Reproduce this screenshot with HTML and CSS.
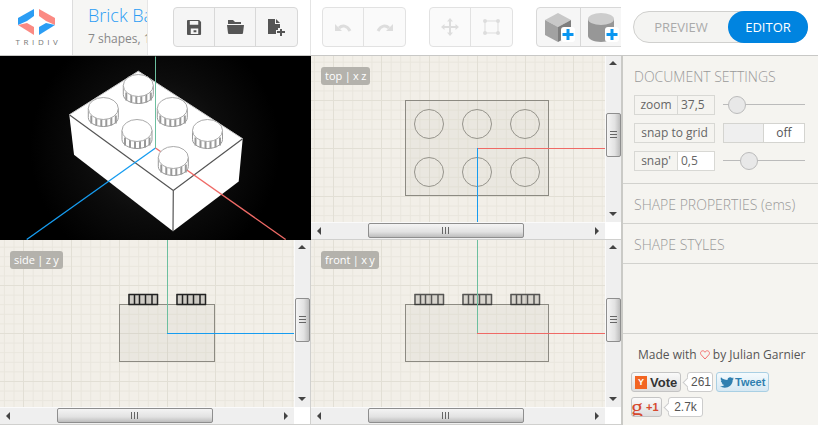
FILE: index.html
```html
<!DOCTYPE html>
<html lang="en">
<head>
    <meta charset="UTF-8">
    <meta name="viewport" content="width=device-width, initial-scale=1.0">
    <title>Tridiv</title>
    <link rel="stylesheet" href="styles.css">
</head>
<body>

<div class="app">
    <div class="main">
        <!-- Top toolbar -->
        <header class="header">
            <div class="logo">
                <svg class="logo-mark" width="38" height="26" viewBox="0 0 38 26">
                    <polygon points="0,9 16,0 16,7 9,12 0,16" fill="#2b9df4"/>
                    <polygon points="37,9 21,0 21,7 28,12 37,16" fill="#fb8a83"/>
                    <polygon points="0,16 9,14 16,18 16,26" fill="#fb8a83"/>
                    <polygon points="37,16 28,14 21,18 21,26" fill="#2b9df4"/>
                </svg>
                <span class="logo-text">TRIDIV</span>
            </div>
            <div class="doc">
                <div class="doc-title">Brick Base</div>
                <div class="doc-info">7 shapes, 1 selected</div>
            </div>
            <div class="tools tools-file">
                <div class="btn-group">
                    <button class="btn"><svg width="15" height="15" viewBox="0 0 16 16"><path d="M1 0h12l2 2v13a1 1 0 0 1-1 1H1a1 1 0 0 1-1-1V1a1 1 0 0 1 1-1zm2 1v4h9V1zm1 8v6h8V9zm3 2h3v2H7z" fill="#555" fill-rule="evenodd"/></svg></button>
                    <button class="btn"><svg width="17" height="14" viewBox="0 0 17 14"><path d="M1 0h5l2 2h6v2H1zM0 5h17l-1 8a1 1 0 0 1-1 1H2a1 1 0 0 1-1-1z" fill="#555"/></svg></button>
                    <button class="btn"><svg width="17" height="17" viewBox="0 0 17 17"><path d="M0 0h7v5h5v4H10v2H8v4H0zM8 0l4 4H8z" fill="#555"/><path d="M12 10h2v2h3v2h-3v3h-2v-3H9v-2h3z" fill="#555"/></svg></button>
                </div>
            </div>
            <div class="tools tools-edit">
                <div class="btn-group">
                    <button class="btn"><svg width="17" height="9" viewBox="0 0 17 9"><path d="M4 5C7 2 12 2 15 8" fill="none" stroke="#ddd" stroke-width="3"/><polygon points="0,1 0,8 7,8" fill="#ddd"/></svg></button>
                    <button class="btn"><svg width="17" height="9" viewBox="0 0 17 9"><path d="M13 5C10 2 5 2 2 8" fill="none" stroke="#ddd" stroke-width="3"/><polygon points="17,1 17,8 10,8" fill="#ddd"/></svg></button>
                </div>
                <div class="btn-group">
                    <button class="btn"><svg width="18" height="18" viewBox="0 0 18 18"><path d="M9 0l3 3.500h-2V8h4.500V6L18 9l-3.500 3v-2H10v4.500h2L9 18l-3-3.500h2V10H3.500v2L0 9l3.500-3v2H8V3.500H6z" fill="#ddd"/></svg></button>
                    <button class="btn"><svg width="17" height="16" viewBox="0 0 17 16"><path d="M2 2h13v12H2z" fill="none" stroke="#ddd"/><g fill="#ddd"><circle cx="2" cy="2" r="2"/><circle cx="15" cy="2" r="2"/><circle cx="2" cy="14" r="2"/><circle cx="15" cy="14" r="2"/></g></svg></button>
                </div>
                <div class="btn-group btn-group-shapes">
                    <button class="btn btn-shape">
                        <svg width="32" height="31" viewBox="0 0 32 31">
                            <polygon points="15,1 28,8 15,15 2,8" fill="#c8c8c8"/>
                            <polygon points="2,8 15,15 15,30 2,23" fill="#a2a2a2"/>
                            <polygon points="15,15 28,8 28,23 15,30" fill="#7e7e7e"/>
                            <rect x="18" y="15" width="14" height="15" fill="#fff" rx="3"/>
                            <path d="M23.500 17h3v4h4v3h-4v4h-3v-4h-4v-3h4z" fill="#0a96f0"/>
                        </svg>
                    </button>
                    <button class="btn btn-shape">
                        <svg width="32" height="31" viewBox="0 0 32 31">
                            <path d="M1 7v17c0 3 6 6 13 6s13-3 13-6V7z" fill="#979797"/>
                            <ellipse cx="14" cy="7" rx="13" ry="6" fill="#cdcdcd"/>
                            <rect x="18" y="15" width="14" height="15" fill="#fff" rx="3"/>
                            <path d="M23.500 17h3v4h4v3h-4v4h-3v-4h-4v-3h4z" fill="#0a96f0"/>
                        </svg>
                    </button>
                </div>
            </div>
        </header>

        <!-- The four views -->
        <div class="views">
            <div class="view view-3d">
                <svg class="scene" viewBox="0 56 311 183">
                    <defs>
                        <g id="stud3d">
                            <path d="M-15 0v9c0 5 7 9 15 9s15-4 15-9V0z" fill="#fff" stroke="#999"/>
                            <path d="M-12 7v8M-7 9v8M-2 10v8M3 10v8M8 9v8M12.500 7v8" stroke="#999" stroke-width="2"/>
                            <ellipse rx="15" ry="11" fill="#fff" stroke="#aaa"/>
                        </g>
                    </defs>
                    <polygon points="138.300,70.700 69.300,114.300 74,154.300 173,230.700 238.700,181 242.700,138.300" fill="#fff"/>
                    <path d="M69.300 114.300L173.300 190L242.700 138.300M173.300 190L173 230.700" fill="none" stroke="#555" stroke-width="1.200"/>
                    <path d="M69.300 114.300L138.300 70.700L242.700 138.300" fill="none" stroke="#ccc"/>
                    <path d="M155.500 147.500L26.700 239" stroke="#169cf0" stroke-width="1.300"/>
                    <path d="M155.500 147.500L285.700 239" stroke="#ef6a66" stroke-width="1.300"/>
                    <use href="#stud3d" x="138.300" y="85"/>
                    <use href="#stud3d" x="103.300" y="108"/>
                    <use href="#stud3d" x="172.300" y="108"/>
                    <use href="#stud3d" x="137" y="130"/>
                    <use href="#stud3d" x="207.500" y="130"/>
                    <use href="#stud3d" x="173.300" y="157"/>
                    <path d="M155.500 56V147.500" stroke="#6cbf9f"/>
                </svg>
            </div>

            <div class="view">
                <div class="canvas canvas-top">
                    <span class="view-tag">top | x z</span>
                    <svg class="scene" viewBox="311 56 294 166">
                        <rect x="405.500" y="100.500" width="143" height="95" class="brick"/>
                        <circle cx="429" cy="124" r="14.500" class="stud-top"/>
                        <circle cx="477" cy="124" r="14.500" class="stud-top"/>
                        <circle cx="525" cy="124" r="14.500" class="stud-top"/>
                        <circle cx="429" cy="172" r="14.500" class="stud-top"/>
                        <circle cx="477" cy="172" r="14.500" class="stud-top"/>
                        <circle cx="525" cy="172" r="14.500" class="stud-top"/>
                        <path d="M477.500 148.500H605" class="axis-x"/>
                        <path d="M477.500 148V222" class="axis-z"/>
                    </svg>
                </div>
                <div class="scroll-v"><i class="arrow-up"></i><b class="thumb-v thumb-v-top"></b><i class="arrow-down"></i></div>
                <div class="scroll-h"><i class="arrow-left"></i><b class="thumb-h"></b><i class="arrow-right"></i></div>
                <div class="scroll-corner"></div>
            </div>

            <div class="view">
                <div class="canvas canvas-side">
                    <span class="view-tag">side | z y</span>
                    <svg class="scene" viewBox="0 240 294 167">
                        <defs>
                            <g id="studSide">
                                <rect x="0" y="0" width="30" height="11" fill="#000" opacity=".15"/>
                                <path d="M.5 .5H30M.5 10.500H30M1 0v11M6.500 0v11M11.500 0v11M17.500 0v11M24 0v11M29.500 0v11" fill="none" stroke="#222" stroke-width="1.500"/>
                            </g>
                        </defs>
                        <rect x="119.500" y="304.500" width="95" height="57" class="brick"/>
                        <use href="#studSide" x="128" y="294"/>
                        <use href="#studSide" x="176" y="294"/>
                        <path d="M167.500 240V333.500" class="axis-y"/>
                        <path d="M167 333.500H294" class="axis-z"/>
                    </svg>
                </div>
                <div class="scroll-v"><i class="arrow-up"></i><b class="thumb-v"></b><i class="arrow-down"></i></div>
                <div class="scroll-h"><i class="arrow-left"></i><b class="thumb-h thumb-h-side"></b><i class="arrow-right"></i></div>
                <div class="scroll-corner"></div>
            </div>

            <div class="view">
                <div class="canvas canvas-front">
                    <span class="view-tag">front | x y</span>
                    <svg class="scene" viewBox="311 240 294 167">
                        <rect x="405.500" y="304.500" width="143" height="57" class="brick"/>
                        <use href="#studSide" x="414" y="294" opacity=".75"/>
                        <use href="#studSide" x="462" y="294" opacity=".75"/>
                        <use href="#studSide" x="510" y="294" opacity=".75"/>
                        <path d="M477.500 240V333.500" class="axis-y"/>
                        <path d="M477 333.500H605" class="axis-x"/>
                    </svg>
                </div>
                <div class="scroll-v"><i class="arrow-up"></i><b class="thumb-v"></b><i class="arrow-down"></i></div>
                <div class="scroll-h"><i class="arrow-left"></i><b class="thumb-h"></b><i class="arrow-right"></i></div>
                <div class="scroll-corner"></div>
            </div>
        </div>
    </div>

    <!-- Right panel -->
    <aside class="panel">
        <div class="mode">
            <div class="mode-switch">
                <span class="mode-item">PREVIEW</span>
                <span class="mode-item mode-active">EDITOR</span>
            </div>
        </div>

        <section class="section section-doc">
            <h2>DOCUMENT SETTINGS</h2>
            <div class="row">
                <div class="field"><label class="field-label">zoom</label><span class="field-value">37,5</span></div>
                <div class="slider"><span class="slider-thumb" style="left: 5px"></span></div>
            </div>
            <div class="row">
                <div class="field"><label class="field-label field-wide">snap to grid</label></div>
                <div class="switch"><span class="switch-knob"></span><span class="switch-text">off</span></div>
            </div>
            <div class="row">
                <div class="field"><label class="field-label">snap'</label><span class="field-value field-white">0,5</span></div>
                <div class="slider"><span class="slider-thumb" style="left: 17px"></span></div>
            </div>
        </section>
        <section class="section"><h2>SHAPE PROPERTIES (ems)</h2></section>
        <section class="section"><h2>SHAPE STYLES</h2></section>

        <footer class="credits">
            <p class="made">Made with <svg class="heart" width="10" height="10" viewBox="0 0 10 10"><path d="M5 9L1.200 4.800C-.3 3 1 .8 2.800.8 4 .8 4.700 1.500 5 2.300 5.300 1.500 6 .8 7.200.8 9 .8 10.300 3 8.800 4.800z" fill="none" stroke="#f46f6f"/></svg> by Julian Garnier</p>
            <div class="social">
                <a class="vote"><span class="vote-y">Y</span>Vote</a>
                <span class="count count-vote">261</span>
                <a class="tweet">
                    <svg width="14" height="11" viewBox="0 0 14 11"><path d="M14 1.500l-1.500.3L13.600.4 12 1C10.500-.6 7.500.3 7.500 3 5 3 2.500 2 1 .3.300 1.800.8 3.300 2 4L.8 3.800C.9 5 1.800 6 3 6.300H1.800C2.200 7.400 3.200 8 4.400 8 3.200 9 1.600 9.500 0 9.300 5 12.500 12.700 10 12.700 3z" fill="#2f7fb0"/></svg>Tweet
                </a>
            </div>
            <div class="social">
                <a class="plus"><span class="plus-g">g</span>+1</a>
                <span class="count count-plus">2.7k</span>
            </div>
        </footer>
    </aside>
</div>

</body>
</html>
```

FILE: styles.css
```css
* { box-sizing: border-box; }
body { margin: 0; font-family: "Open Sans", sans-serif; background: #f5f4f0; overflow: hidden; }
.app { display: flex; width: 818px; height: 425px; overflow: hidden; }
.main { width: 621px; flex: none; }

/* header */
.header { display: flex; height: 56px; background: #fff; border-bottom: 1px solid #c8c8c6; }
.logo { width: 73px; flex: none; display: flex; flex-direction: column; align-items: center; padding-top: 9px; border-right: 1px solid #ddd; }
.logo-mark { display: block; margin-left: 2px; }
.logo-text { font-size: 8px; line-height: 11px; letter-spacing: 3.6px; color: #777; margin-top: 1px; margin-left: 5px; }
.doc { width: 75px; flex: none; padding-left: 15px; background: #f6f6f4; border-right: 1px solid #e6e6e6; overflow: hidden; white-space: nowrap; }
.doc-title { font-size: 18px; font-weight: 300; line-height: 26px; margin-top: 2px; color: #2b9df4; }
.doc-info { font-size: 12px; line-height: 16px; margin-top: 3px; color: #888; }
.tools { display: flex; padding-top: 7px; }
.tools-file { width: 163px; padding-left: 25px; border-right: 1px solid #e4e4e4; flex: none; }
.tools-edit { width: 311px; padding-left: 11px; gap: 23px; flex: none; overflow: hidden; border-right: 1px solid #ddd; }
.btn-group { display: flex; height: 40px; flex: none; background: #fafafa; border: 1px solid #e2e2e2; border-radius: 4px; }
.tools-file .btn-group { background: #f5f5f5; border-color: #d8d8d8; }
.btn { width: 41px; height: 38px; padding: 0; display: flex; align-items: center; justify-content: center; background: none; border: none; border-right: 1px solid #e2e2e2; }
.tools-file .btn { border-right-color: #d8d8d8; }
.btn:last-child { border-right: none; }
.btn-group-shapes { background: #f6f6f6; border-color: #d8d8d8; }
.btn-shape { width: 44px; border-right-color: #d8d8d8; }

/* views */
.views { display: grid; grid-template-columns: 311px 310px; grid-template-rows: 184px 185px; }
.view { display: grid; grid-template-columns: 1fr 16px; grid-template-rows: 1fr 17px; background: #d0d0ce; padding-bottom: 1px; min-height: 0; }
.view:nth-child(3) { padding-right: 1px; }
.view-3d { display: block; padding: 0; background: #000 radial-gradient(circle at 155px 92px, #222 0, #0c0c0c 70px, #000 125px); }
.canvas { position: relative; overflow: hidden; background-color: #f2efe8;
    background-image:
        linear-gradient(to right, #e2dfd5 1px, transparent 1px),
        linear-gradient(to bottom, #e2dfd5 1px, transparent 1px),
        linear-gradient(to right, #e9e6dd 1px, transparent 1px),
        linear-gradient(to bottom, #e9e6dd 1px, transparent 1px);
    background-size: 48px 48px, 48px 48px, 9.6px 9.6px, 9.6px 9.6px; }
.canvas-top { background-position: 166px 92px; }
.canvas-side { background-position: 167px 93px; }
.canvas-front { background-position: 166px 93px; }
.scene { display: block; width: 100%; height: 100%; }
.view-tag { position: absolute; left: 10px; top: 11px; height: 18px; padding: 0 4px; font-size: 11px; line-height: 17px; color: #fff; white-space: pre; word-spacing: -0.5px; background: #b4b2ac; border-radius: 3px; }
.brick { fill: rgba(120, 115, 100, 0.06); stroke: #8c8a82; }
.stud-top { fill: none; stroke: #96948c; }
.axis-x { fill: none; stroke: #ef6a66; }
.axis-y { fill: none; stroke: #6cbf9f; }
.axis-z { fill: none; stroke: #169cf0; }

/* scrollbars */
.scroll-v { position: relative; background: #efefef; border-left: 1px solid #fafafa; }
.scroll-h { position: relative; background: #efefef; border-top: 1px solid #fafafa; }
.scroll-corner { background: #fff; }
.scroll-v i, .scroll-h i { position: absolute; width: 0; height: 0; border: 4px solid transparent; }
.arrow-up { left: 3px; top: 5px; border-bottom: 4px solid #444 !important; border-top-width: 0 !important; }
.arrow-down { left: 3px; bottom: 6px; border-top: 4px solid #444 !important; border-bottom-width: 0 !important; }
.arrow-left { left: 6px; top: 4px; border-right: 4px solid #444 !important; border-left-width: 0 !important; }
.arrow-right { right: 6px; top: 4px; border-left: 4px solid #444 !important; border-right-width: 0 !important; }
.thumb-v { position: absolute; left: 0; top: 58px; width: 15px; height: 44px; background: linear-gradient(to right, #f4f4f4, #e2e2e2 60%, #bdbdbd); border: 1px solid #8e8e8e; border-radius: 2px; }
.thumb-v-top { top: 57px; }
.thumb-v::after { content: ""; position: absolute; left: 3px; top: 17px; width: 7px; height: 8px; background: repeating-linear-gradient(to bottom, #666 0, #666 1px, transparent 1px, transparent 3px); }
.thumb-h { position: absolute; left: 57px; top: 0; height: 15px; width: 156px; background: linear-gradient(to bottom, #f4f4f4, #e2e2e2 60%, #bdbdbd); border: 1px solid #8e8e8e; border-radius: 2px; }
.thumb-h-side { left: 57px; }
.thumb-h::after { content: ""; position: absolute; left: 73px; top: 3px; width: 8px; height: 7px; background: repeating-linear-gradient(to right, #666 0, #666 1px, transparent 1px, transparent 3px); }

/* panel */
.panel { width: 197px; height: 425px; flex: none; display: flex; flex-direction: column; background: #f5f4f0; border-left: 2px solid #cacac6; }
.mode { height: 56px; flex: none; margin-left: -2px; padding: 11px 10px 0 12px; background: #fff; border-bottom: 1px solid #c8c8c6; }
.mode-switch { display: flex; height: 32px; background: #f4f4f2; border: 1px solid #d0d0ce; border-radius: 16px; }
.mode-item { flex: 1; font-size: 13px; line-height: 30px; text-align: center; color: #aaa; }
.mode-active { flex: none; width: 80px; margin: -1px -1px -1px 0; line-height: 32px; color: #fff; background: #0084e0; border-radius: 16px; }
.section { padding: 11px 0 8px 11px; border-bottom: 1px solid #d2d2ce; }
.section h2 { margin: 0; font-size: 14px; font-weight: 300; line-height: 20px; color: #999; }
.section-doc { height: 128px; }
.row { display: flex; gap: 8px; height: 20px; margin-bottom: 8px; }
.section-doc h2 { margin-bottom: 8px; }
.field { display: flex; width: 81px; flex: none; font-size: 12px; color: #666; }
.field-label { width: 43px; line-height: 17px; text-align: center; border: 1px solid #d8d8d4; border-right: none; }
.field-wide { width: 81px; border-right: 1px solid #d8d8d4; }
.field-value { flex: 1; padding-left: 3px; line-height: 18px; border: 1px solid #d8d8d4; }
.field-white { background: #fff; }
.slider { position: relative; width: 82px; height: 20px; background: linear-gradient(#bbb, #bbb) 0 9px / 100% 1px no-repeat; }
.slider-thumb { position: absolute; top: 1px; width: 18px; height: 18px; background: #e8e8e8; border: 1px solid #bbb; border-radius: 50%; }
.switch { display: flex; width: 82px; font-size: 12px; color: #555; border: 1px solid #d4d4d0; background: #fff; }
.switch-knob { width: 40px; background: #efefef; border-right: 1px solid #d4d4d0; }
.switch-text { flex: 1; line-height: 18px; text-align: center; }
.credits { margin-top: auto; height: 92px; padding: 12px 0 0 8px; border-top: 1px solid #d2d2ce; }
.credits .social:last-child { margin-top: 5px; }
.made { margin: 0 0 8px 7px; font-size: 12px; line-height: 18px; color: #555; white-space: nowrap; }
.heart { vertical-align: -1px; }
.social { display: flex; height: 20px; font-family: "Liberation Sans", Arial, sans-serif; }
.vote { display: flex; align-items: center; gap: 3px; width: 50px; padding-left: 3px; font-size: 13px; font-weight: bold; color: #333; background: linear-gradient(#fafafa, #dedede); border: 1px solid #c4c4c4; border-radius: 3px; }
.vote-y { width: 12px; height: 13px; font-size: 9px; line-height: 13px; text-align: center; color: #fff; background: #f26522; }
.count { position: relative; margin-left: 6px; padding: 0 3px; font-size: 12px; line-height: 18px; text-align: center; color: #555; background: #fff; border: 1px solid #ccc; border-radius: 3px; }
.count::before { content: ""; position: absolute; left: -4px; top: 6px; width: 6px; height: 6px; background: #fff; border-left: 1px solid #ccc; border-bottom: 1px solid #ccc; transform: rotate(45deg); }
.count-vote { width: 26px; }
.count-plus { width: 35px; }
.tweet { display: flex; align-items: center; gap: 1px; width: 53px; margin-left: 3px; padding-left: 3px; font-size: 11px; font-weight: bold; color: #2f7fb0; background: linear-gradient(#f4fafd, #d6e8f3); border: 1px solid #a9cfe3; border-radius: 3px; }
.plus { display: flex; align-items: center; gap: 3px; width: 31px; font-size: 11px; font-weight: bold; color: #d6492f; background: linear-gradient(#fafafa, #dedede); border: 1px solid #c4c4c4; border-radius: 3px; overflow: hidden; }
.plus-g { font-family: "Liberation Serif", serif; font-size: 24px; line-height: 14px; font-weight: normal; color: #d6492f; margin-left: -1px; }
```
